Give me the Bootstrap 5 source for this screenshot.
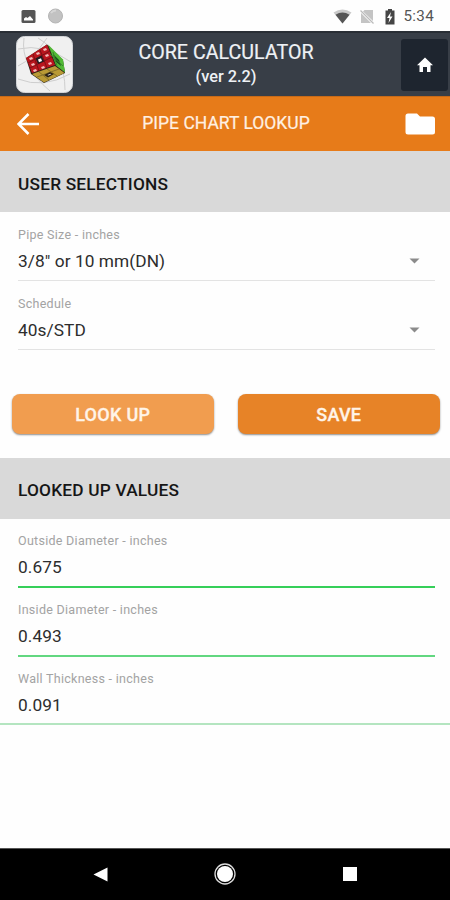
<!DOCTYPE html>
<html lang="en">
<head>
<meta charset="utf-8">
<meta name="viewport" content="width=device-width, initial-scale=1">
<title>Core Calculator</title>
<link href="https://cdn.jsdelivr.net/npm/bootstrap@5.3.0/dist/css/bootstrap.min.css" rel="stylesheet">
<style>
body{font-family:Roboto,sans-serif;background:#fefefe;color:#212121;height:900px;overflow:hidden}
svg{display:block;flex:none}
.status-bar{height:31px;padding:1px 16px 0 21px;color:#555;font-size:15.2px}
.status-bar .clock{line-height:31px;letter-spacing:.3px}
.app-bar{height:65px;background:#383e47;border-top:2px solid #292e35;padding-left:16px;padding-right:2px;color:#eef1f5}
.title-box{padding-right:22px}
.app-title{font-size:19.6px;line-height:24px;letter-spacing:.05px;-webkit-text-stroke:.2px #eef1f5}
.app-version{font-size:16.3px;line-height:23px;font-weight:500}
.home-btn{width:47px;height:52px;background:#1e252f;border-radius:3px;padding:0}
.page-bar{height:55px;background:#e77b19;border-top:1px solid #c86a18;padding:0 15px 0 17px;color:#fff0e2;font-size:17.5px}
.page-title{padding:0 0 1px 7px;-webkit-text-stroke:.2px #fff0e2}
.section-head{height:61px;background:#d9d9d9;padding:6px 18px 0;font-size:17.3px;font-weight:500;color:#161616;letter-spacing:.2px}
.section-values{padding-top:4px}
.field{height:69px;margin:0 15px 0 18px;padding-top:14px;border-bottom:1px solid #e3e3e3}
.field-label{font-size:12.5px;line-height:18px;color:#a3a3a3;letter-spacing:.28px}
.field-value{font-size:17.3px;line-height:24px;margin-top:5px;color:#2d2d2d;letter-spacing:.07px}
.caret{margin-right:15px}
.result{padding-top:13px;border-bottom:2px solid #35cf59}
.result.mid{border-color:#62d780}
.result.last{height:68px;margin:0;padding-left:18px;border-color:#b4e5c0}
.actions{padding:44px 10px 24px 11.5px;gap:23.5px}
.act{height:40px;border:0;border-radius:8px;padding:0;font-size:18px;font-weight:500;color:#fff4e8;box-shadow:0 1px 2px rgba(0,0,0,.45);letter-spacing:.3px;-webkit-text-stroke:.3px #fff4e8}
.act-look{background:#f19d4f}
.act-save{background:#e78327}
.nav-keys{height:52px;background:#000;border-top:1px solid #555;padding:0 93px 1px}
.home-key{margin-right:1px}
</style>
<script src="https://cdn.jsdelivr.net/npm/bootstrap@5.3.0/dist/js/bootstrap.bundle.min.js"></script>
</head>
<body class="d-flex flex-column">
<div class="status-bar d-flex align-items-center">
  <svg width="15" height="15" viewBox="0 0 15 15"><rect x=".5" y="1" width="14" height="13" rx="1.5" fill="#555"/><path d="M3 11.5v-2l2-1.5 1.5 1 2.500-2 3 3.500v1z" fill="#fff"/></svg>
  <svg class="ms-2" width="26" height="17" viewBox="0 0 26 17"><circle cx="11.500" cy="8" r="7" fill="#c2c2c2" stroke="#b4b4b4"/><path d="M7 5a6 6 0 0 1 5-2.500" stroke="#d6d6d6" fill="none" stroke-width="2"/></svg>
  <svg class="ms-auto" width="19" height="15" viewBox="0 0 19 15"><path d="M.5 3.500Q9.500-2.500 18.500 3.500L9.500 14.500z" fill="#c9c9c9"/><path d="M2.500 5.700Q9.500 1.500 16.500 5.700L9.500 14.500z" fill="#555"/></svg>
  <svg class="ms-2" width="14" height="15" viewBox="0 0 14 15"><path d="M4.500 1h8.500v11L3 2.500zM1 4l10 10H1z" fill="#c4c4c4"/><path d="M.5 1.500l13 13" stroke="#bbb" stroke-width="1.200"/></svg>
  <svg class="ms-2" width="18" height="17" viewBox="0 0 18 17"><path d="M6 1h4v1.500h2.500v14h-9v-14H6z" fill="#454545"/><path d="M9 4l-4 6h2.500l-1 5 4-6.500H8z" fill="#fff"/></svg>
  <span class="clock ps-1">5:34</span>
</div>

<header class="app-bar d-flex align-items-center">
  <svg width="57" height="57" viewBox="0 0 57 57">
    <rect x=".5" y=".5" width="56" height="56" rx="8" fill="#f0f0f0" stroke="#d3d5d8"/>
    <g fill="none" stroke="#cecece" stroke-width="1"><path d="M8 2Q4 30 34 55M2 13Q28 7 55 26M22 2Q49 18 49 54M2 43Q27 53 54 38M2 30Q17 23 31 2"/></g>
    <path d="M10 22L31 8.500 47 24l2 13-21 10-13-9z" fill="#292018"/>
    <path d="M10 22L31 8.500 39 29l-23 8z" fill="#b9151e"/>
    <path d="M32 8.500l15 15 2 13-9-7z" fill="#52ba36"/>
    <path d="M16 38l23-8 9.500 7L28 46.500z" fill="#b99a35"/>
    <path d="M17 18l6 17M24 14l7 18M12 27l22-12M14 32l22-11" stroke="#7d1015" stroke-width="1" fill="none"/>
    <g fill="#f1b8b8"><path d="M13 22l3-1 1 2-3 1zM20 17l3-1 1 2-3 1zM27 13l3-1 1 2-3 1zM15 28l3-1 1 2-3 1zM29 19l3-1 1 2-3 1zM17 34l3-1 1 2-3 1zM25 31l3-1 1 2-3 1zM32 27l3-1 1 2-3 1z"/></g>
    <path d="M19.500 22.500l6-3 2.500 6-6 2.500z" fill="#221c22"/><path d="M22 23.500l3-1.200 1 2.700-3 1.200z" fill="#fff"/>
    <path d="M37 18l6 6 2 6-6-5z" fill="#174e18"/><path d="M37 16l4 14M34 18l13 12" stroke="#38872d" fill="none"/>
    <path d="M23 36l10 8M31 33l10 7M21 41l22-8" stroke="#85702b" fill="none"/><path d="M28 39l6-3 4 2-6 3.500z" fill="#292116"/><path d="M31.500 39l3-1.200.8.500-3 1.200z" fill="#eee"/>
  </svg>
  <div class="flex-grow-1 text-center title-box">
    <div class="app-title">CORE CALCULATOR</div>
    <div class="app-version">(ver 2.2)</div>
  </div>
  <button class="btn home-btn d-flex align-items-center justify-content-center" aria-label="Home">
    <svg width="18" height="16" viewBox="0 0 18 16"><path d="M9 .5l8 7.700h-2.500V15H11v-5H7v5H3.500V8.200H1z" fill="#fff"/></svg>
  </button>
</header>

<div class="page-bar d-flex align-items-center justify-content-between">
  <svg width="23" height="23" viewBox="0 0 23 23"><path d="M22 11H2M11.500 1l-10 10 10 10" fill="none" stroke="#fff" stroke-width="2.600"/></svg>
  <span class="page-title">PIPE CHART LOOKUP</span>
  <svg width="30" height="23" viewBox="0 0 30 23"><path d="M3 .5h9l3 3h12.500q2.500 0 2.500 2.500v13q0 2.500-2.500 2.500H3Q.5 21.500.5 19V3Q.5.5 3 .5z" fill="#fff"/></svg>
</div>

<main class="flex-grow-1">
  <div class="section-head d-flex align-items-center">USER SELECTIONS</div>
  <div class="field">
    <div class="field-label">Pipe Size - inches</div>
    <div class="field-value d-flex align-items-center justify-content-between"><span>3/8" or 10 mm(DN)</span><svg class="caret" width="11" height="6" viewBox="0 0 11 6"><path d="M.5.5h10l-5 5z" fill="#8b8b8b"/></svg></div>
  </div>
  <div class="field">
    <div class="field-label">Schedule</div>
    <div class="field-value d-flex align-items-center justify-content-between"><span>40s/STD</span><svg class="caret" width="11" height="6" viewBox="0 0 11 6"><path d="M.5.5h10l-5 5z" fill="#8b8b8b"/></svg></div>
  </div>
  <div class="actions d-flex">
    <button class="btn act act-look flex-fill w-50">LOOK UP</button>
    <button class="btn act act-save flex-fill w-50">SAVE</button>
  </div>
  <div class="section-head section-values d-flex align-items-center">LOOKED UP VALUES</div>
  <div class="field result">
    <div class="field-label">Outside Diameter - inches</div>
    <div class="field-value">0.675</div>
  </div>
  <div class="field result mid">
    <div class="field-label">Inside Diameter - inches</div>
    <div class="field-value">0.493</div>
  </div>
  <div class="field result last">
    <div class="field-label">Wall Thickness - inches</div>
    <div class="field-value">0.091</div>
  </div>
</main>

<footer class="nav-keys d-flex align-items-center justify-content-between">
  <svg width="15" height="15" viewBox="0 0 15 15"><path d="M14.500.5v14L.5 7.500z" fill="#fff"/></svg>
  <svg class="home-key" width="22" height="22" viewBox="0 0 22 22"><circle cx="11" cy="11" r="10" fill="none" stroke="#ddd" stroke-width="1.300"/><circle cx="11" cy="11" r="8" fill="#fff"/></svg>
  <svg width="14" height="14" viewBox="0 0 14 14"><path d="M0 0h14v14H0z" fill="#fff"/></svg>
</footer>
</body>
</html>
